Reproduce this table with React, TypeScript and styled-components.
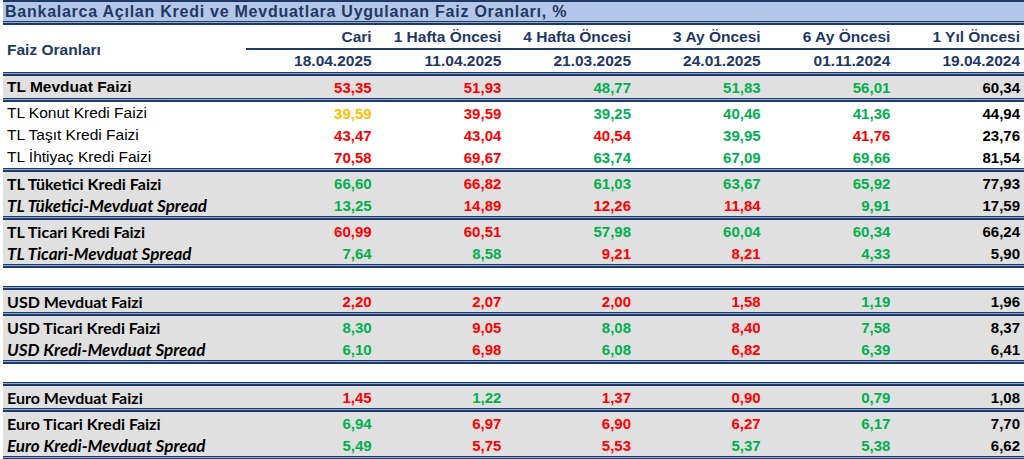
import styled, { createGlobalStyle } from "styled-components";

/* renk kodları */
const COLORS: Record<string, string> = {
  r: "#ff0000",
  g: "#00b050",
  y: "#ffc000",
  k: "#000000",
};

type LabelKind = "arialBold" | "arial" | "bold" | "italic";
type RowData = { label: string; kind: LabelKind; values: string[] };

const columns = [
  ["Cari", "18.04.2025"],
  ["1 Hafta Öncesi", "11.04.2025"],
  ["4 Hafta Öncesi", "21.03.2025"],
  ["3 Ay Öncesi", "24.01.2025"],
  ["6 Ay Öncesi", "01.11.2024"],
  ["1 Yıl Öncesi", "19.04.2024"],
];

/* değer:renk */
const row = (label: string, kind: LabelKind, raw: string): RowData => ({
  label,
  kind,
  values: raw.split(" "),
});

/* her grup: gri mi, satırlar, önünde boşluk var mı */
const groups: { gray: boolean; gap?: boolean; rows: RowData[] }[] = [
  {
    gray: true,
    rows: [row("TL Mevduat Faizi", "arialBold", "53,35:r 51,93:r 48,77:g 51,83:g 56,01:g 60,34:k")],
  },
  {
    gray: false,
    rows: [
      row("TL Konut Kredi Faizi", "arial", "39,59:y 39,59:r 39,25:g 40,46:g 41,36:g 44,94:k"),
      row("TL Taşıt Kredi Faizi", "arial", "43,47:r 43,04:r 40,54:r 39,95:g 41,76:r 23,76:k"),
      row("TL İhtiyaç Kredi Faizi", "arial", "70,58:r 69,67:r 63,74:g 67,09:g 69,66:g 81,54:k"),
    ],
  },
  {
    gray: true,
    rows: [
      row("TL Tüketici Kredi Faizi", "bold", "66,60:g 66,82:r 61,03:g 63,67:g 65,92:g 77,93:k"),
      row("TL Tüketici-Mevduat Spread", "italic", "13,25:g 14,89:r 12,26:r 11,84:r 9,91:g 17,59:k"),
    ],
  },
  {
    gray: true,
    rows: [
      row("TL Ticari Kredi Faizi", "bold", "60,99:r 60,51:r 57,98:g 60,04:g 60,34:g 66,24:k"),
      row("TL Ticari-Mevduat Spread", "italic", "7,64:g 8,58:g 9,21:r 8,21:r 4,33:g 5,90:k"),
    ],
  },
  {
    gray: true,
    gap: true,
    rows: [row("USD Mevduat Faizi", "bold", "2,20:r 2,07:r 2,00:r 1,58:r 1,19:g 1,96:k")],
  },
  {
    gray: true,
    rows: [
      row("USD Ticari Kredi Faizi", "bold", "8,30:g 9,05:r 8,08:g 8,40:r 7,58:g 8,37:k"),
      row("USD Kredi-Mevduat Spread", "italic", "6,10:g 6,98:r 6,08:g 6,82:r 6,39:g 6,41:k"),
    ],
  },
  {
    gray: true,
    gap: true,
    rows: [row("Euro Mevduat Faizi", "bold", "1,45:r 1,22:g 1,37:r 0,90:r 0,79:g 1,08:k")],
  },
  {
    gray: true,
    rows: [
      row("Euro Ticari Kredi Faizi", "bold", "6,94:g 6,97:r 6,90:r 6,27:r 6,17:g 7,70:k"),
      row("Euro Kredi-Mevduat Spread", "italic", "5,49:g 5,75:r 5,53:r 5,37:g 5,38:g 6,62:k"),
    ],
  },
];

const App = () => {
  return (
    <>
      <GlobalStyle />
      <Sheet>
        <TitleBar>Bankalarca Açılan Kredi ve Mevduatlara Uygulanan Faiz Oranları, %</TitleBar>
        <Rule />
        <Header>
          <HeaderLabel>Faiz Oranları</HeaderLabel>
          {columns.map(([name]) => (
            <HeaderName key={name}>{name}</HeaderName>
          ))}
          {columns.map(([name, date]) => (
            <HeaderDate key={date + name}>{date}</HeaderDate>
          ))}
        </Header>
        {groups.map((group, gi) => (
          <Group key={gi}>
            {group.gap && (
              <>
                <Rule />
                <Spacer />
              </>
            )}
            <Rule />
            {group.rows.map((r) => (
              <Row key={r.label} $gray={group.gray}>
                <Label $kind={r.kind}>{r.label}</Label>
                {r.values.map((v, i) => {
                  const [num, c] = v.split(":");
                  return (
                    <Value key={i} $color={COLORS[c]}>
                      {num}
                    </Value>
                  );
                })}
              </Row>
            ))}
          </Group>
        ))}
        <Rule />
      </Sheet>
    </>
  );
};

export default App;

const GlobalStyle = createGlobalStyle`
  body {
    margin: 0;
    background: #fff;
    font-family: "Liberation Sans", Arial, sans-serif;
  }
`;

const Sheet = styled.div`
  width: 1021px;
  margin-left: 3px;
  display: flex;
  flex-direction: column;
`;

const TitleBar = styled.div`
  height: 19px;
  flex-shrink: 0;
  border-top: 2px solid #1f3864;
  background: #b4c6e7;
  color: #1f3864;
  font-size: 16px;
  font-weight: 700;
  letter-spacing: 0.75px;
  line-height: 19px;
  padding-left: 2px;
  white-space: nowrap;
`;

/* Excel çift çizgi */
const Rule = styled.div`
  flex-shrink: 0;
  height: 1px;
  background: #8ea9db;
  border-top: 1px solid #1f3864;
  border-bottom: 2px solid #1f3864;
`;

const Group = styled.div`
  display: flex;
  flex-direction: column;
`;

const Spacer = styled.div`
  height: 18px;
  flex-shrink: 0;
`;

const Header = styled.div`
  display: grid;
  grid-template-columns: 243px repeat(6, 1fr);
  grid-template-rows: 25px 22px;
  color: #1f3864;
  font-weight: 700;
  font-size: 15.5px;
`;

const HeaderLabel = styled.div`
  grid-row: 1 / span 2;
  display: flex;
  align-items: center;
  padding-left: 4px;
  padding-top: 2px;
`;

const HeaderName = styled.div`
  display: flex;
  align-items: flex-end;
  justify-content: flex-end;
  padding: 0 4px 2px 0;
  border-bottom: 2px solid #1f3864;
  line-height: 18px;
`;

const HeaderDate = styled.div`
  display: flex;
  align-items: center;
  justify-content: flex-end;
  padding-right: 4px;
`;

const Row = styled.div<{ $gray: boolean }>`
  display: grid;
  grid-template-columns: 243px repeat(6, 1fr);
  height: 22px;
  flex-shrink: 0;
  align-items: center;
  background: ${(p) => (p.$gray ? "#e0e0e0" : "#ffffff")};
`;

const labelSize: Record<LabelKind, string> = {
  arialBold: "15.5px",
  arial: "15.5px",
  bold: "16px",
  italic: "17px",
};

const Label = styled.div<{ $kind: LabelKind }>`
  padding-left: 4px;
  white-space: nowrap;
  color: #000;
  font-family: ${(p) =>
    p.$kind === "bold" || p.$kind === "italic"
      ? `Lato, "Open Sans", sans-serif`
      : `"Liberation Sans", Arial, sans-serif`};
  font-size: ${(p) => labelSize[p.$kind]};
  font-weight: ${(p) => (p.$kind === "arial" ? 400 : 700)};
  font-style: ${(p) => (p.$kind === "italic" ? "italic" : "normal")};
`;

const Value = styled.div<{ $color: string }>`
  text-align: right;
  padding-right: 4px;
  font-size: 15px;
  font-weight: 700;
  color: ${(p) => p.$color};
`;
